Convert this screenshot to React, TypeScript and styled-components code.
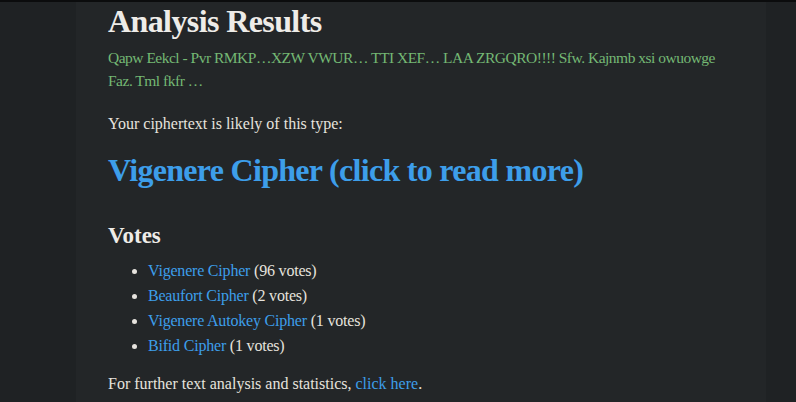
import React from "react";
import styled, { createGlobalStyle } from "styled-components";

const Global = createGlobalStyle`
  html, body { margin: 0; padding: 0; background: #1f2224; }
  body { font-family: "Liberation Serif", serif; color: #e6e3de; }
`;

const Page = styled.div`
  border-top: 2px solid #0b0c0d;
  min-height: 400px;
  display: flex;
`;

const Panel = styled.main`
  margin-left: 76px;
  width: 690px;
  background: #232628;
  padding: 0 32px;
  box-sizing: border-box;
`;

const Title = styled.h2`
  margin: 0;
  font-size: 32px;
  line-height: 38px;
  font-weight: 700;
  letter-spacing: -0.6px;
  color: #eeece8;
`;

const Green = styled.p`
  margin: 6px 0 0;
  font-size: 15.5px;
  letter-spacing: -0.5px;
  line-height: 23px;
  color: #74b874;
`;

const Para = styled.p<{ $top: number }>`
  margin: ${(p) => p.$top}px 0 0;
  font-size: 16px;
  line-height: 23px;
`;

const Link = styled.a`
  color: #3d9eea;
  text-decoration: none;
`;

const Big = styled.h2`
  margin: 15px 0 0;
  font-size: 32px;
  line-height: 40px;
  font-weight: 700;
  letter-spacing: -0.7px;
`;

const Sub = styled.h3`
  margin: 31px 0 0;
  font-size: 23px;
  line-height: 30px;
  font-weight: 700;
  color: #eeece8;
`;

const List = styled.ul`
  margin: 7px 0 0;
  padding-left: 40px;
  font-size: 16px;
  line-height: 25px;
  letter-spacing: -0.2px;
`;

const votes = [
  ["Vigenere Cipher", 96],
  ["Beaufort Cipher", 2],
  ["Vigenere Autokey Cipher", 1],
  ["Bifid Cipher", 1],
] as const;

export default function App() {
  return (
    <>
      <Global />
      <Page>
        <Panel>
          <Title>Analysis Results</Title>
          <Green>
            Qapw Eekcl - Pvr RMKP…XZW VWUR… TTI XEF… LAA ZRGQRO!!!! Sfw. Kajnmb xsi owuowge Faz. Tml fkfr …
          </Green>
          <Para $top={20}>Your ciphertext is likely of this type:</Para>
          <Big>
            <Link href="#">Vigenere Cipher (click to read more)</Link>
          </Big>
          <Sub>Votes</Sub>
          <List>
            {votes.map(([name, n]) => (
              <li key={name}>
                <Link href="#">{name}</Link> ({n} votes)
              </li>
            ))}
          </List>
          <Para $top={14}>
            For further text analysis and statistics, <Link href="#">click here</Link>.
          </Para>
        </Panel>
      </Page>
    </>
  );
}
